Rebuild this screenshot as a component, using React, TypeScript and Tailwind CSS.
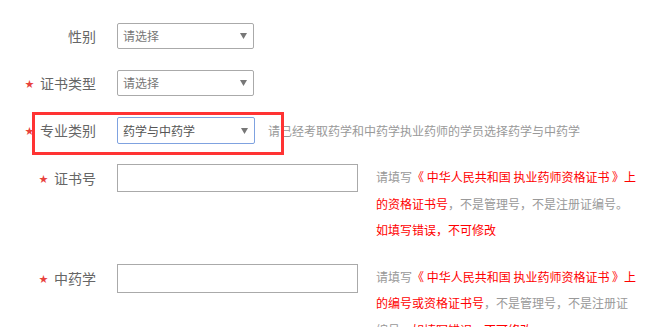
import React from 'react';

const font = { fontFamily: '"Noto Sans CJK SC", "Microsoft YaHei", sans-serif' };

function Star() {
    return <span className="text-[9px] leading-none text-[#e8413c]">★</span>;
}

function Label({ text, required }: { text: string; required?: boolean }) {
    return (
        <div className="flex h-full w-[96px] shrink-0 items-center justify-end gap-[6px] text-[14px] text-[#666]">
            {required && <Star />}
            <span>{text}</span>
        </div>
    );
}

function Arrow() {
    return (
        <svg width="7" height="6" viewBox="0 0 7 6" className="shrink-0">
            <path d="M0 0 H7 L3.5 6 Z" fill="#777" />
        </svg>
    );
}

function Select({ value, focused }: { value: string; focused?: boolean }) {
    return (
        <div
            className={
                focused
                    ? 'flex h-[27px] w-[138px] items-center justify-between rounded-[2px] border border-[#7fa2e0] pl-[5px] pr-[6px] text-[12px] text-[#555]'
                    : 'flex h-[26px] w-[137px] items-center justify-between rounded-[2px] border border-[#aaa] pl-[5px] pr-[6px] text-[12px] text-[#777]'
            }
        >
            <span>{value}</span>
            <Arrow />
        </div>
    );
}

function Red({ children }: { children: React.ReactNode }) {
    return <span className="text-[#ff0000]">{children}</span>;
}

export default function App() {
    return (
        <div className="relative h-[327px] w-[667px] overflow-hidden bg-white" style={font}>
            <div className="flex flex-col pt-[23px]">
                <div className="flex h-[26px] items-center">
                    <Label text="性别" />
                    <div className="ml-[21px]">
                        <Select value="请选择" />
                    </div>
                </div>

                <div className="mt-[21px] flex h-[26px] items-center">
                    <Label text="证书类型" required />
                    <div className="ml-[21px]">
                        <Select value="请选择" />
                    </div>
                </div>

                <div className="mt-[21px] flex h-[27px] items-center">
                    <Label text="专业类别" required />
                    <div className="ml-[21px]">
                        <Select value="药学与中药学" focused />
                    </div>
                    <span className="ml-[13px] text-[12px] text-[#999]">
                        请已经考取药学和中药学执业药师的学员选择药学与中药学
                    </span>
                </div>

                <div className="mt-[20px] flex items-start">
                    <div className="h-[28px]">
                        <Label text="证书号" required />
                    </div>
                    <div className="ml-[21px] h-[28px] w-[241px] border border-[#aaa]" />
                    <div className="ml-[18px] text-[12px] leading-[26.5px] text-[#999]">
                        请填写<Red>《 中华人民共和国 执业药师资格证书 》上</Red>
                        <br />
                        <Red>的资格证书号</Red>，不是管理号，不是注册证编号。
                        <br />
                        <Red>如填写错误，不可修改</Red>
                    </div>
                </div>

                <div className="mt-[20px] flex items-start">
                    <div className="h-[29px]">
                        <Label text="中药学" required />
                    </div>
                    <div className="ml-[21px] h-[29px] w-[241px] border border-[#aaa]" />
                    <div className="ml-[18px] text-[12px] leading-[26.5px] text-[#999]">
                        请填写<Red>《 中华人民共和国 执业药师资格证书 》上</Red>
                        <br />
                        <Red>的编号或资格证书号</Red>，不是管理号，不是注册证
                        <br />
                        编号。<Red>如填写错误，不可修改</Red>
                    </div>
                </div>
            </div>

            <div className="absolute left-[32px] top-[112px] h-[43px] w-[252px] border-[3px] border-[#f33]" />
        </div>
    );
}
